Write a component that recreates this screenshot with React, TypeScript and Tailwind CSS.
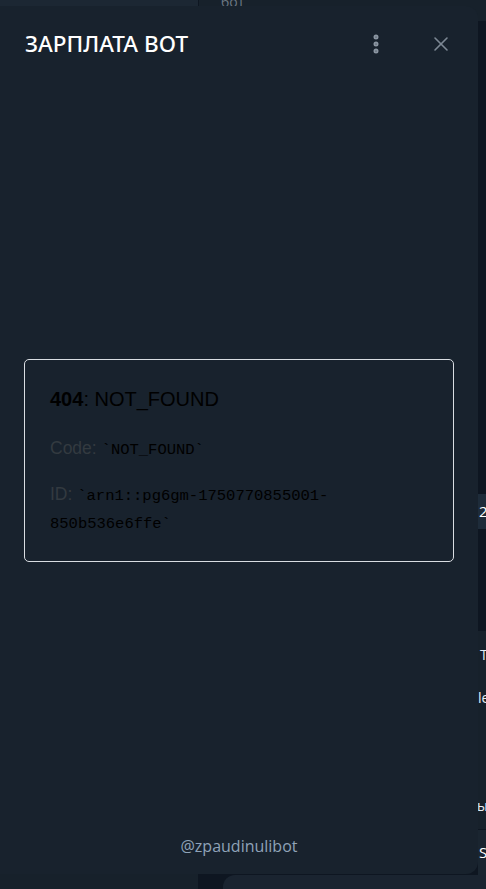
import { MoreVertical, X } from "lucide-react";

function Backdrop() {
  return (
    <div className="absolute inset-0 flex">
      {/* chat list column */}
      <div className="w-[198px] flex flex-col">
        <div className="h-[27px] bg-[#1c2733]" />
        <div className="flex-1 bg-[#17212b]" />
      </div>
      {/* chat column */}
      <div className="flex-1 flex flex-col border-l border-[#0e1621] bg-[#0e1621]">
        <div className="h-[27px] bg-[#17212b] pl-[22px] text-[14px] leading-[10px] text-[#6c7883] [font-family:'Open_Sans',sans-serif] -mt-[3px]">
          бот
        </div>
        <div className="flex-1 flex flex-col items-end">
          <div className="w-[8px] mt-[473px] h-[35px] bg-[#1e2c3a] text-[15px] text-white leading-[35px] overflow-hidden [font-family:'Open_Sans',sans-serif] pl-[1px]">
            2
          </div>
          <div className="w-[8px] h-[102px]" />
          <div className="w-[8px] h-[198px] bg-[#17212b] overflow-hidden text-[14px] text-[#e8eef4] [font-family:'Open_Sans',sans-serif] pl-[2px]">
            <div className="mt-[13px]">T</div>
            <div className="mt-[22px] -ml-[2px]">le</div>
            <div className="mt-[87px] -ml-[3px]">ы</div>
          </div>
          <div className="w-[8px] h-[46px] border-t border-[#0e1621] bg-[#1a2530] overflow-hidden text-[15px] text-white leading-[44px] [font-family:'Open_Sans',sans-serif] pl-[1px]">
            S
          </div>
          <div className="w-[8px] flex-1" />
        </div>
        <div className="h-[15px] ml-[24px] rounded-tl-[12px] bg-[#1a2430]" />
      </div>
    </div>
  );
}

function ErrorCard() {
  return (
    <div className="mx-[24px] mt-[277px] rounded-[5px] border border-[#d9dde2] px-[25px] pt-[27px] pb-[24px] [font-family:'Liberation_Sans',Arial,sans-serif]">
      <h1 className="text-[20px] leading-[24px] text-black">
        <span className="font-bold">404</span>: NOT_FOUND
      </h1>
      <p className="mt-[25px] text-[17.5px] leading-[24px] text-[#333a40]">
        Code:{" "}
        <code className="text-[15.5px] text-black [font-family:'Liberation_Mono',monospace]">
          `NOT_FOUND`
        </code>
      </p>
      <p className="mt-[19px] text-[17.5px] leading-[26px] text-[#333a40]">
        ID:{" "}
        <code className="text-[15.5px] text-black [font-family:'Liberation_Mono',monospace]">
          `arn1::pg6gm-1750770855001-850b536e6ffe`
        </code>
      </p>
    </div>
  );
}

export default function App() {
  return (
    <div className="relative w-[486px] h-[889px] overflow-hidden bg-[#0e1621]">
      <Backdrop />

      {/* bot web app sheet */}
      <div className="absolute left-0 top-[6px] w-[478px] h-[868px] bg-[#18222d] rounded-tr-[12px] rounded-br-[12px] flex flex-col">
        <div className="h-[76px] flex items-center pl-[25px] pr-[25px]">
          <div className="flex-1 text-white text-[22.5px] font-medium [font-family:'Noto_Sans','Open_Sans',sans-serif]">
            ЗАРПЛАТА ВОТ
          </div>
          <MoreVertical className="w-[24px] h-[24px] text-[#8b96a2] mr-[41px]" strokeWidth={3} />
          <X className="w-[24px] h-[24px] text-[#7d8894]" strokeWidth={1.6} />
        </div>

        <ErrorCard />

        <div className="flex-1" />
        <div className="pb-[16px] text-center text-[16px] text-[#8fa3b8] [font-family:'Open_Sans',sans-serif]">
          @zpaudinulibot
        </div>
      </div>
    </div>
  );
}
